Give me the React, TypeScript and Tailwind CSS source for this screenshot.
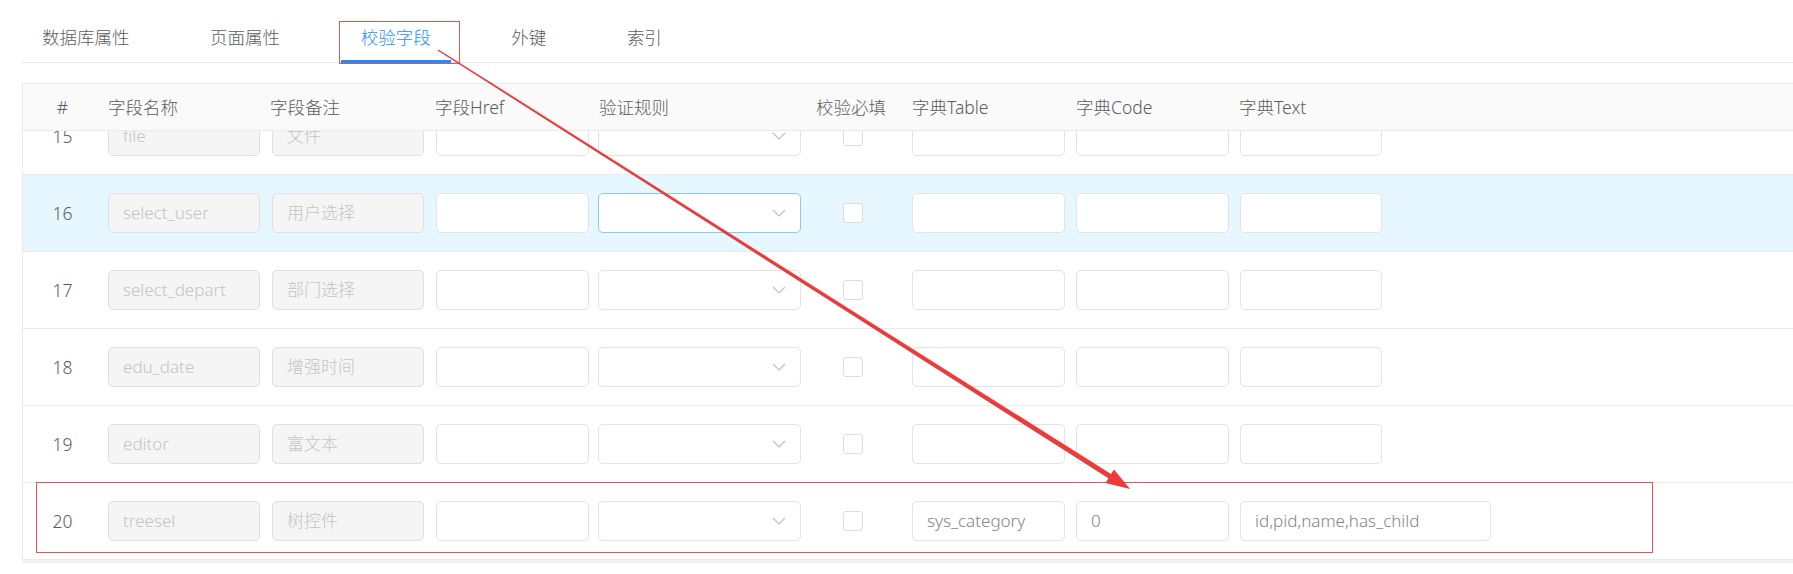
import React from "react";

type Row = {
  no: number;
  name: string;
  remark: string;
  dictTable?: string;
  dictCode?: string;
  dictText?: string;
  hover?: boolean;
  marked?: boolean;
};

const rows: Row[] = [
  { no: 15, name: "file", remark: "文件" },
  { no: 16, name: "select_user", remark: "用户选择", hover: true },
  { no: 17, name: "select_depart", remark: "部门选择" },
  { no: 18, name: "edu_date", remark: "增强时间" },
  { no: 19, name: "editor", remark: "富文本" },
  {
    no: 20,
    name: "treesel",
    remark: "树控件",
    dictTable: "sys_category",
    dictCode: "0",
    dictText: "id,pid,name,has_child",
    marked: true,
  },
];

const tabs = ["数据库属性", "页面属性", "校验字段", "外键", "索引"];

function Input({
  value,
  disabled,
  className,
}: {
  value?: string;
  disabled?: boolean;
  className: string;
}) {
  return (
    <div
      className={`ml-[6px] flex h-[40px] items-center overflow-hidden whitespace-nowrap rounded-[5px] border pl-[14px] text-[17px] ${
        disabled
          ? "border-[#e0e0e0] bg-[#f5f5f5] text-[#c4c4c4]"
          : "border-[#e3e3e3] bg-white text-[#858585]"
      } ${className}`}
    >
      {value}
    </div>
  );
}

function Select({ active }: { active?: boolean }) {
  return (
    <div
      className={`ml-[6px] flex h-[40px] w-[203px] items-center justify-end rounded-[5px] border bg-white pr-[14px] ${
        active ? "border-[#8ec8f0]" : "border-[#e3e3e3]"
      }`}
    >
      <svg width="14" height="8" viewBox="0 0 14 8" fill="none">
        <polyline points="1,1 7,7 13,1" stroke="#c0c0c0" strokeWidth="1.2" />
      </svg>
    </div>
  );
}

export default function App() {
  return (
    <div className="relative h-[574px] w-full overflow-hidden bg-white pl-[21px] font-['Noto_Sans','Noto_Sans_CJK_SC',sans-serif] font-light text-[#5c5c5c]">
      {/* tabs */}
      <div className="mt-[12px] flex border-b border-[#ebebeb] pl-[1px]">
        {tabs.map((t, i) => (
          <div
            key={t}
            className={`relative flex h-[50px] items-center px-[20px] text-[17.5px] ${
              i === 2 ? "text-[#1890ff]" : ""
            } ${i < tabs.length - 1 ? "mr-[40.6px]" : ""}`}
          >
            {t}
            {i === 2 && (
              <>
                <span className="absolute bottom-[-1px] left-0 h-[3px] w-full bg-[#1890ff]" />
                <span className="absolute left-[-2px] top-[9px] h-[43px] w-[121px] border-[1.5px] border-[#e25555]" />
              </>
            )}
          </div>
        ))}
      </div>

      {/* table */}
      <div className="ml-[1px] mt-[20px] border-l border-t border-[#ebebeb]">
        <div className="flex h-[47px] items-center border-b border-[#ebebeb] bg-[#fafafa] text-[17.5px]">
          <div className="w-[79px] text-center">#</div>
          <div className="w-[164px] pl-[6px]">字段名称</div>
          <div className="w-[164px] pl-[4px]">字段备注</div>
          <div className="w-[162px] pl-[5px]">字段Href</div>
          <div className="w-[215px] pl-[7px]">验证规则</div>
          <div className="w-[99px] pl-[9px]">校验必填</div>
          <div className="w-[164px] pl-[6px]">字典Table</div>
          <div className="w-[164px] pl-[6px]">字典Code</div>
          <div className="pl-[5px]">字典Text</div>
        </div>

        <div className="overflow-hidden">
          {rows.map((r, i) => (
            <div
              key={r.no}
              className={`relative flex h-[77px] items-center border-b border-[#ebebeb] ${
                r.hover ? "bg-[#e6f7ff]" : "bg-white"
              } ${i === 0 ? "-mt-[33px]" : ""}`}
            >
              <div className="w-[79px] text-center text-[17.5px]">{r.no}</div>
              <div className="w-[164px]">
                <Input value={r.name} disabled className="w-[152px]" />
              </div>
              <div className="w-[164px]">
                <Input value={r.remark} disabled className="w-[152px]" />
              </div>
              <div className="w-[162px]">
                <Input className="w-[153px]" />
              </div>
              <div className="w-[215px]">
                <Select active={r.hover} />
              </div>
              <div className="w-[99px]">
                <div className="ml-[36px] h-[20px] w-[20px] rounded-[3px] border border-[#dcdcdc] bg-white" />
              </div>
              <div className="w-[164px]">
                <Input value={r.dictTable} className="w-[153px]" />
              </div>
              <div className="w-[164px]">
                <Input value={r.dictCode} className="w-[153px]" />
              </div>
              <div>
                <Input
                  value={r.dictText}
                  className={r.dictText ? "w-[251px]" : "w-[142px]"}
                />
              </div>
              {r.marked && (
                <span className="absolute left-[13px] top-[-1px] h-[71px] w-[1617px] border-[1.5px] border-[#e25555]" />
              )}
            </div>
          ))}
        </div>
        <div className="h-[3px] bg-[#f0f0f0]" />
      </div>

      {/* annotation arrow */}
      <svg
        className="pointer-events-none absolute left-0 top-0"
        width="1793"
        height="574"
        viewBox="0 0 1793 574"
      >
        <polygon
          points="438.4,49.4 1111,474.1 1114,469.4 1130,489 1105.4,483 1108.4,478.3 437.6,50.6"
          fill="#ec3b3b"
        />
      </svg>
    </div>
  );
}
